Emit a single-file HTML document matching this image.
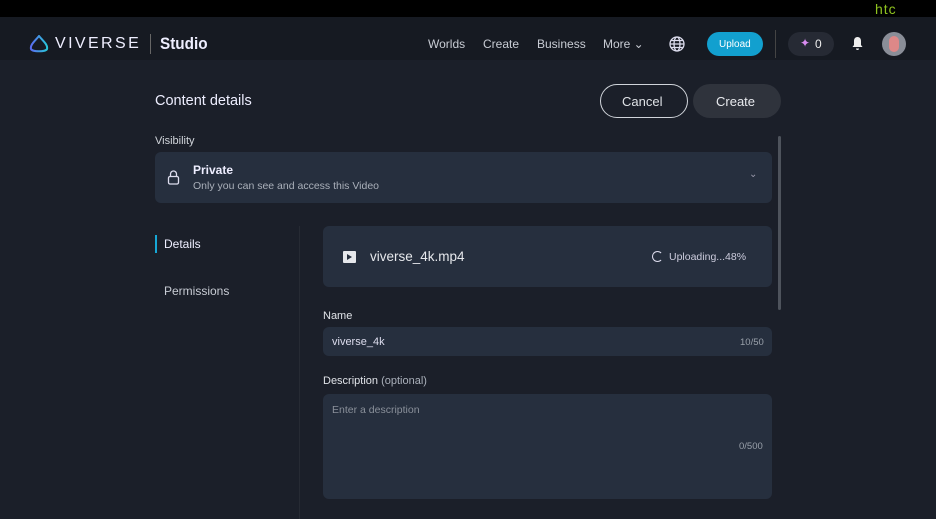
<!DOCTYPE html>
<html><head><meta charset="utf-8"><style>
*{margin:0;padding:0;box-sizing:border-box}
body{width:936px;height:519px;overflow:hidden;background:#1b1f29;font-family:"Liberation Sans",sans-serif;color:#e8eaee;position:relative}
.abs{position:absolute}
.top{left:0;top:0;width:936px;height:17px;background:#000}
.nav{left:0;top:17px;width:936px;height:43px;background:#161a22}
.t{position:absolute;white-space:nowrap}
.box{position:absolute;background:#262f3e;border-radius:6px}
</style></head><body>
<div class="abs top"></div>
<div class="t" style="left:875px;top:1px;color:#8fc31f;font-size:14px;letter-spacing:1px">htc</div>
<div class="abs nav"></div>
<svg class="abs" style="left:29px;top:35px" width="20" height="18" viewBox="0 0 20 18"><defs><linearGradient id="g" x1="0" x2="1"><stop offset="0" stop-color="#5b6cf0"/><stop offset="1" stop-color="#28c6d8"/></linearGradient></defs><path d="M10 1 C5 7 1 10 2 14 C3 17 17 17 18 14 C19 10 15 7 10 1Z" fill="none" stroke="url(#g)" stroke-width="2"/></svg>
<div class="t" style="left:55px;top:35px;font-size:16px;letter-spacing:2.4px;color:#eef">VIVERSE</div>
<div class="abs" style="left:150px;top:34px;width:1px;height:20px;background:#666"></div>
<div class="t" style="left:160px;top:34px;font-size:17px;color:#eef;font-weight:bold;transform:scaleX(0.9);transform-origin:left">Studio</div>
<div class="t" style="left:428px;top:37px;font-size:12px;color:#c8ccd4">Worlds</div>
<div class="t" style="left:483px;top:37px;font-size:12px;color:#c8ccd4">Create</div>
<div class="t" style="left:537px;top:37px;font-size:12px;color:#c8ccd4">Business</div>
<div class="t" style="left:603px;top:37px;font-size:12px;color:#c8ccd4">More ⌄</div>
<svg class="abs" style="left:669px;top:36px" width="16" height="16" viewBox="0 0 16 16" fill="none" stroke="#dde" stroke-width="1.3"><circle cx="8" cy="8" r="7"/><ellipse cx="8" cy="8" rx="3" ry="7"/><path d="M1 8h14M2 4.5h12M2 11.5h12"/></svg>
<div class="abs" style="left:707px;top:32px;width:56px;height:24px;border-radius:12px;background:#12a0cf"></div>
<div class="t" style="left:719px;top:39px;font-size:10px;color:#fff">Upload</div>
<div class="abs" style="left:775px;top:30px;width:1px;height:28px;background:#444"></div>
<div class="abs" style="left:788px;top:32px;width:46px;height:24px;border-radius:12px;background:#262a34"></div>
<div class="t" style="left:800px;top:36px;font-size:12px;color:#d98cf0">✦</div>
<div class="t" style="left:815px;top:37px;font-size:12px;color:#eee">0</div>
<svg class="abs" style="left:851px;top:36px" width="13" height="15" viewBox="0 0 13 15"><path d="M6.5 1C4 1 3 3 3 5v4L1.5 11h10L10 9V5C10 3 9 1 6.5 1Z M5 12.5h3a1.5 1.5 0 0 1-3 0Z" fill="#eee"/></svg>
<div class="abs" style="left:882px;top:32px;width:24px;height:24px;border-radius:12px;background:#8a8e98"></div>
<div class="abs" style="left:889px;top:36px;width:10px;height:16px;border-radius:5px;background:#d88"></div>

<div class="t" style="left:155px;top:93px;font-size:14.5px;color:#eef">Content details</div>
<div class="abs" style="left:600px;top:84px;width:88px;height:34px;border-radius:17px;border:1.5px solid #d0d4da"></div>
<div class="t" style="left:622px;top:94px;font-size:13px;color:#dfe2e6">Cancel</div>
<div class="abs" style="left:693px;top:84px;width:88px;height:34px;border-radius:17px;background:#2f333c"></div>
<div class="t" style="left:716px;top:94px;font-size:13px;color:#e8eaee">Create</div>
<div class="abs" style="left:778px;top:136px;width:3px;height:174px;border-radius:2px;background:#4e535c"></div>

<div class="t" style="left:155px;top:135px;font-size:11px;color:#d0d4da">Visibility</div>
<div class="box" style="left:155px;top:152px;width:617px;height:51px"></div>
<svg class="abs" style="left:167px;top:170px" width="13" height="15" viewBox="0 0 13 15" fill="none" stroke="#dde" stroke-width="1.3"><rect x="1.5" y="6.5" width="10" height="7.5" rx="1.5"/><path d="M3.5 6.5V4a3 3 0 0 1 6 0v2.5"/></svg>
<div class="t" style="left:193px;top:163px;font-size:12px;font-weight:bold;color:#eef">Private</div>
<div class="t" style="left:193px;top:180px;font-size:10.5px;color:#aab0ba">Only you can see and access this Video</div>
<div class="t" style="left:749px;top:169px;font-size:10px;color:#99a">⌄</div>

<div class="abs" style="left:155px;top:235px;width:2px;height:18px;background:#17a7d6"></div>
<div class="t" style="left:164px;top:237px;font-size:12px;color:#eef">Details</div>
<div class="t" style="left:164px;top:284px;font-size:12px;color:#c8ccd4">Permissions</div>
<div class="abs" style="left:299px;top:226px;width:1px;height:293px;background:#262a33"></div>

<div class="box" style="left:323px;top:226px;width:449px;height:61px"></div>
<div class="abs" style="left:343px;top:251px;width:13px;height:12px;background:#e6e8ec;border-radius:1px"></div>
<div class="abs" style="left:347px;top:254px;width:0;height:0;border-left:5px solid #262f3e;border-top:3px solid transparent;border-bottom:3px solid transparent"></div>
<div class="t" style="left:370px;top:249px;font-size:13.5px;color:#e6e8ec">viverse_4k.mp4</div>
<div class="abs" style="left:652px;top:251px;width:11px;height:11px;border-radius:50%;border:1.5px solid #dde;border-right-color:transparent"></div>
<div class="t" style="left:669px;top:251px;font-size:10.5px;color:#ccd">Uploading...48%</div>

<div class="t" style="left:323px;top:310px;font-size:11px;color:#e0e3e8">Name</div>
<div class="box" style="left:323px;top:327px;width:449px;height:29px"></div>
<div class="t" style="left:332px;top:336px;font-size:11px;color:#dde">viverse_4k</div>
<div class="t" style="left:740px;top:337px;font-size:9.5px;color:#99a0aa">10/50</div>
<div class="t" style="left:323px;top:375px;font-size:11px;color:#e0e3e8">Description <span style="color:#aab0ba">(optional)</span></div>
<div class="box" style="left:323px;top:394px;width:449px;height:105px"></div>
<div class="t" style="left:332px;top:404px;font-size:10.5px;color:#8a909a">Enter a description</div>
<div class="t" style="left:739px;top:441px;font-size:9.5px;color:#99a0aa">0/500</div>
</body></html>
